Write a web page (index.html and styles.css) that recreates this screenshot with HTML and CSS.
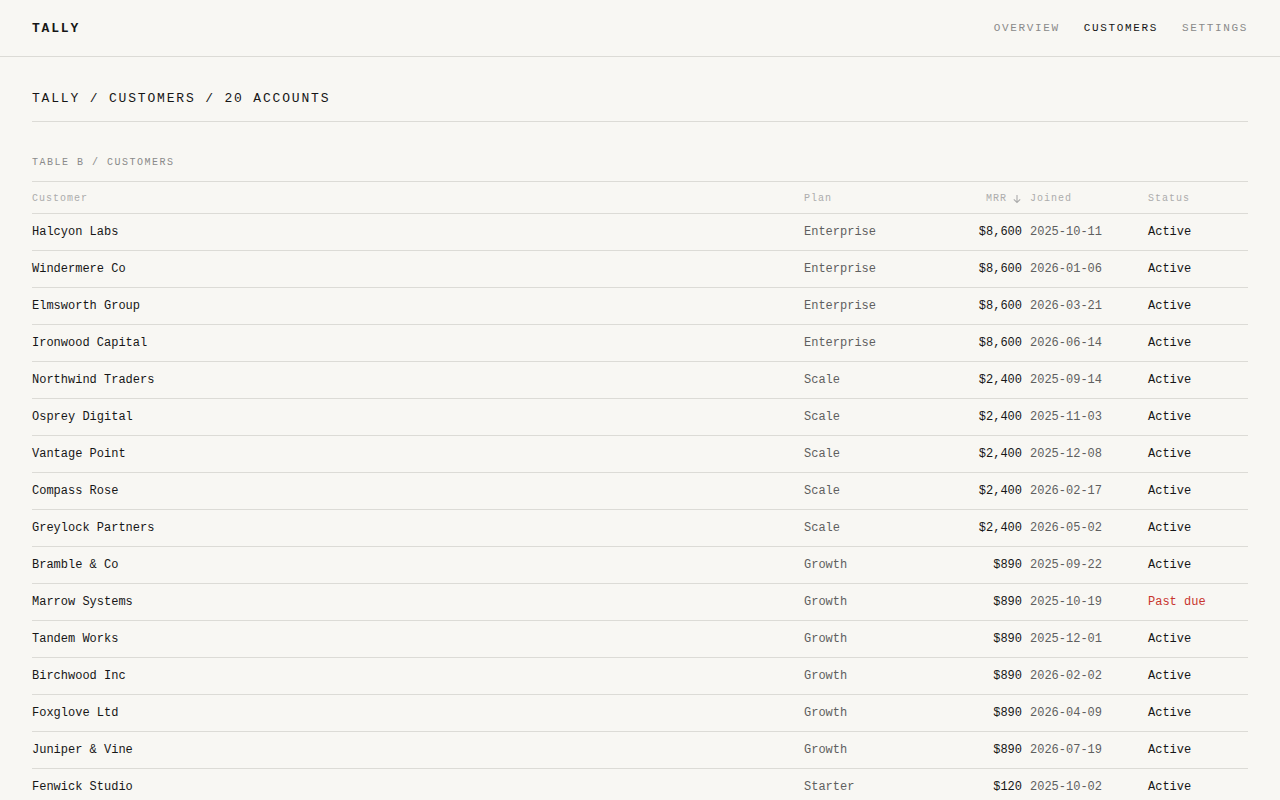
FILE: index.html
```html
<!DOCTYPE html>
<html lang="en">

<head>
    <meta charset="UTF-8">
    <meta name="viewport" content="width=device-width, initial-scale=1.0">
    <title>Tally — Customers</title>
    <link rel="stylesheet" href="styles.css">
</head>

<body>
    <header class="topbar">
        <div class="logo">TALLY</div>
        <nav class="nav">
            <a href="#">Overview</a>
            <a href="#" class="active">Customers</a>
            <a href="#">Settings</a>
        </nav>
    </header>

    <main class="page">
        <h1 class="crumbs">Tally / Customers / 20 accounts</h1>

        <section class="table-block">
            <div class="table-label">Table B / Customers</div>
            <div class="table">
                <div class="row head">
                    <div>Customer</div>
                    <div>Plan</div>
                    <div class="num">MRR
                        <svg class="sort" width="10" height="10" viewBox="0 0 10 10" fill="none" stroke="currentColor" stroke-width="1.1">
                            <path d="M5 1v7.5M1.8 5.3 5 8.5l3.2-3.2" />
                        </svg>
                    </div>
                    <div>Joined</div>
                    <div>Status</div>
                </div>
                <div class="row"><div class="name">Halcyon Labs</div><div class="plan">Enterprise</div><div class="num">$8,600</div><div class="date">2025-10-11</div><div class="status">Active</div></div>
                <div class="row"><div class="name">Windermere Co</div><div class="plan">Enterprise</div><div class="num">$8,600</div><div class="date">2026-01-06</div><div class="status">Active</div></div>
                <div class="row"><div class="name">Elmsworth Group</div><div class="plan">Enterprise</div><div class="num">$8,600</div><div class="date">2026-03-21</div><div class="status">Active</div></div>
                <div class="row"><div class="name">Ironwood Capital</div><div class="plan">Enterprise</div><div class="num">$8,600</div><div class="date">2026-06-14</div><div class="status">Active</div></div>
                <div class="row"><div class="name">Northwind Traders</div><div class="plan">Scale</div><div class="num">$2,400</div><div class="date">2025-09-14</div><div class="status">Active</div></div>
                <div class="row"><div class="name">Osprey Digital</div><div class="plan">Scale</div><div class="num">$2,400</div><div class="date">2025-11-03</div><div class="status">Active</div></div>
                <div class="row"><div class="name">Vantage Point</div><div class="plan">Scale</div><div class="num">$2,400</div><div class="date">2025-12-08</div><div class="status">Active</div></div>
                <div class="row"><div class="name">Compass Rose</div><div class="plan">Scale</div><div class="num">$2,400</div><div class="date">2026-02-17</div><div class="status">Active</div></div>
                <div class="row"><div class="name">Greylock Partners</div><div class="plan">Scale</div><div class="num">$2,400</div><div class="date">2026-05-02</div><div class="status">Active</div></div>
                <div class="row"><div class="name">Bramble &amp; Co</div><div class="plan">Growth</div><div class="num">$890</div><div class="date">2025-09-22</div><div class="status">Active</div></div>
                <div class="row"><div class="name">Marrow Systems</div><div class="plan">Growth</div><div class="num">$890</div><div class="date">2025-10-19</div><div class="status past-due">Past due</div></div>
                <div class="row"><div class="name">Tandem Works</div><div class="plan">Growth</div><div class="num">$890</div><div class="date">2025-12-01</div><div class="status">Active</div></div>
                <div class="row"><div class="name">Birchwood Inc</div><div class="plan">Growth</div><div class="num">$890</div><div class="date">2026-02-02</div><div class="status">Active</div></div>
                <div class="row"><div class="name">Foxglove Ltd</div><div class="plan">Growth</div><div class="num">$890</div><div class="date">2026-04-09</div><div class="status">Active</div></div>
                <div class="row"><div class="name">Juniper &amp; Vine</div><div class="plan">Growth</div><div class="num">$890</div><div class="date">2026-07-19</div><div class="status">Active</div></div>
                <div class="row"><div class="name">Fenwick Studio</div><div class="plan">Starter</div><div class="num">$120</div><div class="date">2025-10-02</div><div class="status">Active</div></div>
                <div class="row"><div class="name">Lumen Press</div><div class="plan">Starter</div><div class="num">$120</div><div class="date">2025-12-15</div><div class="status">Active</div></div>
                <div class="row"><div class="name">Quarry Hill</div><div class="plan">Starter</div><div class="num">$120</div><div class="date">2026-03-04</div><div class="status">Active</div></div>
                <div class="row"><div class="name">Saltmarsh Co</div><div class="plan">Starter</div><div class="num">$120</div><div class="date">2026-05-27</div><div class="status">Active</div></div>
                <div class="row"><div class="name">Thistle Labs</div><div class="plan">Starter</div><div class="num">$120</div><div class="date">2026-08-11</div><div class="status">Active</div></div>
            </div>
        </section>
    </main>
</body>

</html>
```

FILE: styles.css
```css
* {
    margin: 0;
    padding: 0;
    box-sizing: border-box
}

:root {
    --bg: #f8f7f3;
    --ink: #161616;
    --muted: #5f5f5f;
    --faint: #8a8a8a;
    --fainter: #acacac;
    --rule: #dcdbd6;
    --danger: #c8352e
}

body {
    background: var(--bg);
    color: var(--ink);
    font-family: "Liberation Mono", "DejaVu Sans Mono", monospace;
    font-size: 12px
}

a {
    color: inherit;
    text-decoration: none
}

.topbar {
    height: 57px;
    padding: 0 32px;
    border-bottom: 1px solid var(--rule);
    display: flex;
    align-items: center;
    justify-content: space-between
}

.logo {
    font-size: 13px;
    font-weight: 700;
    letter-spacing: 0.14em
}

.nav {
    display: flex;
    gap: 24px
}

.nav a {
    font-size: 11px;
    letter-spacing: 0.15em;
    text-transform: uppercase;
    color: var(--faint)
}

.nav a.active {
    color: var(--ink)
}

.page {
    padding: 0 32px
}

.crumbs {
    font-size: 13px;
    font-weight: 400;
    letter-spacing: 0.14em;
    text-transform: uppercase;
    padding: 34px 0 15px;
    border-bottom: 1px solid var(--rule)
}

.table-block {
    padding-top: 35px
}

.table-label {
    font-size: 10px;
    letter-spacing: 0.15em;
    text-transform: uppercase;
    color: var(--faint);
    padding-bottom: 13px
}

.table {
    border-top: 1px solid var(--rule)
}

.row {
    display: grid;
    grid-template-columns: 772px 130px 96px 118px 100px;
    align-items: center;
    height: 37px;
    border-bottom: 1px solid var(--rule)
}

.row.head {
    height: 32px;
    padding-top: 1px;
    font-size: 10px;
    letter-spacing: 0.1em;
    color: var(--fainter)
}

.row .num {
    text-align: right;
    padding-right: 8px
}

.row.head .num {
    display: flex;
    align-items: center;
    justify-content: flex-end;
    gap: 5px;
    padding-right: 8px
}

.sort {
    color: var(--fainter);
    margin-top: 2px
}

.plan,
.date {
    color: var(--muted)
}

.past-due {
    color: var(--danger)
}
```
